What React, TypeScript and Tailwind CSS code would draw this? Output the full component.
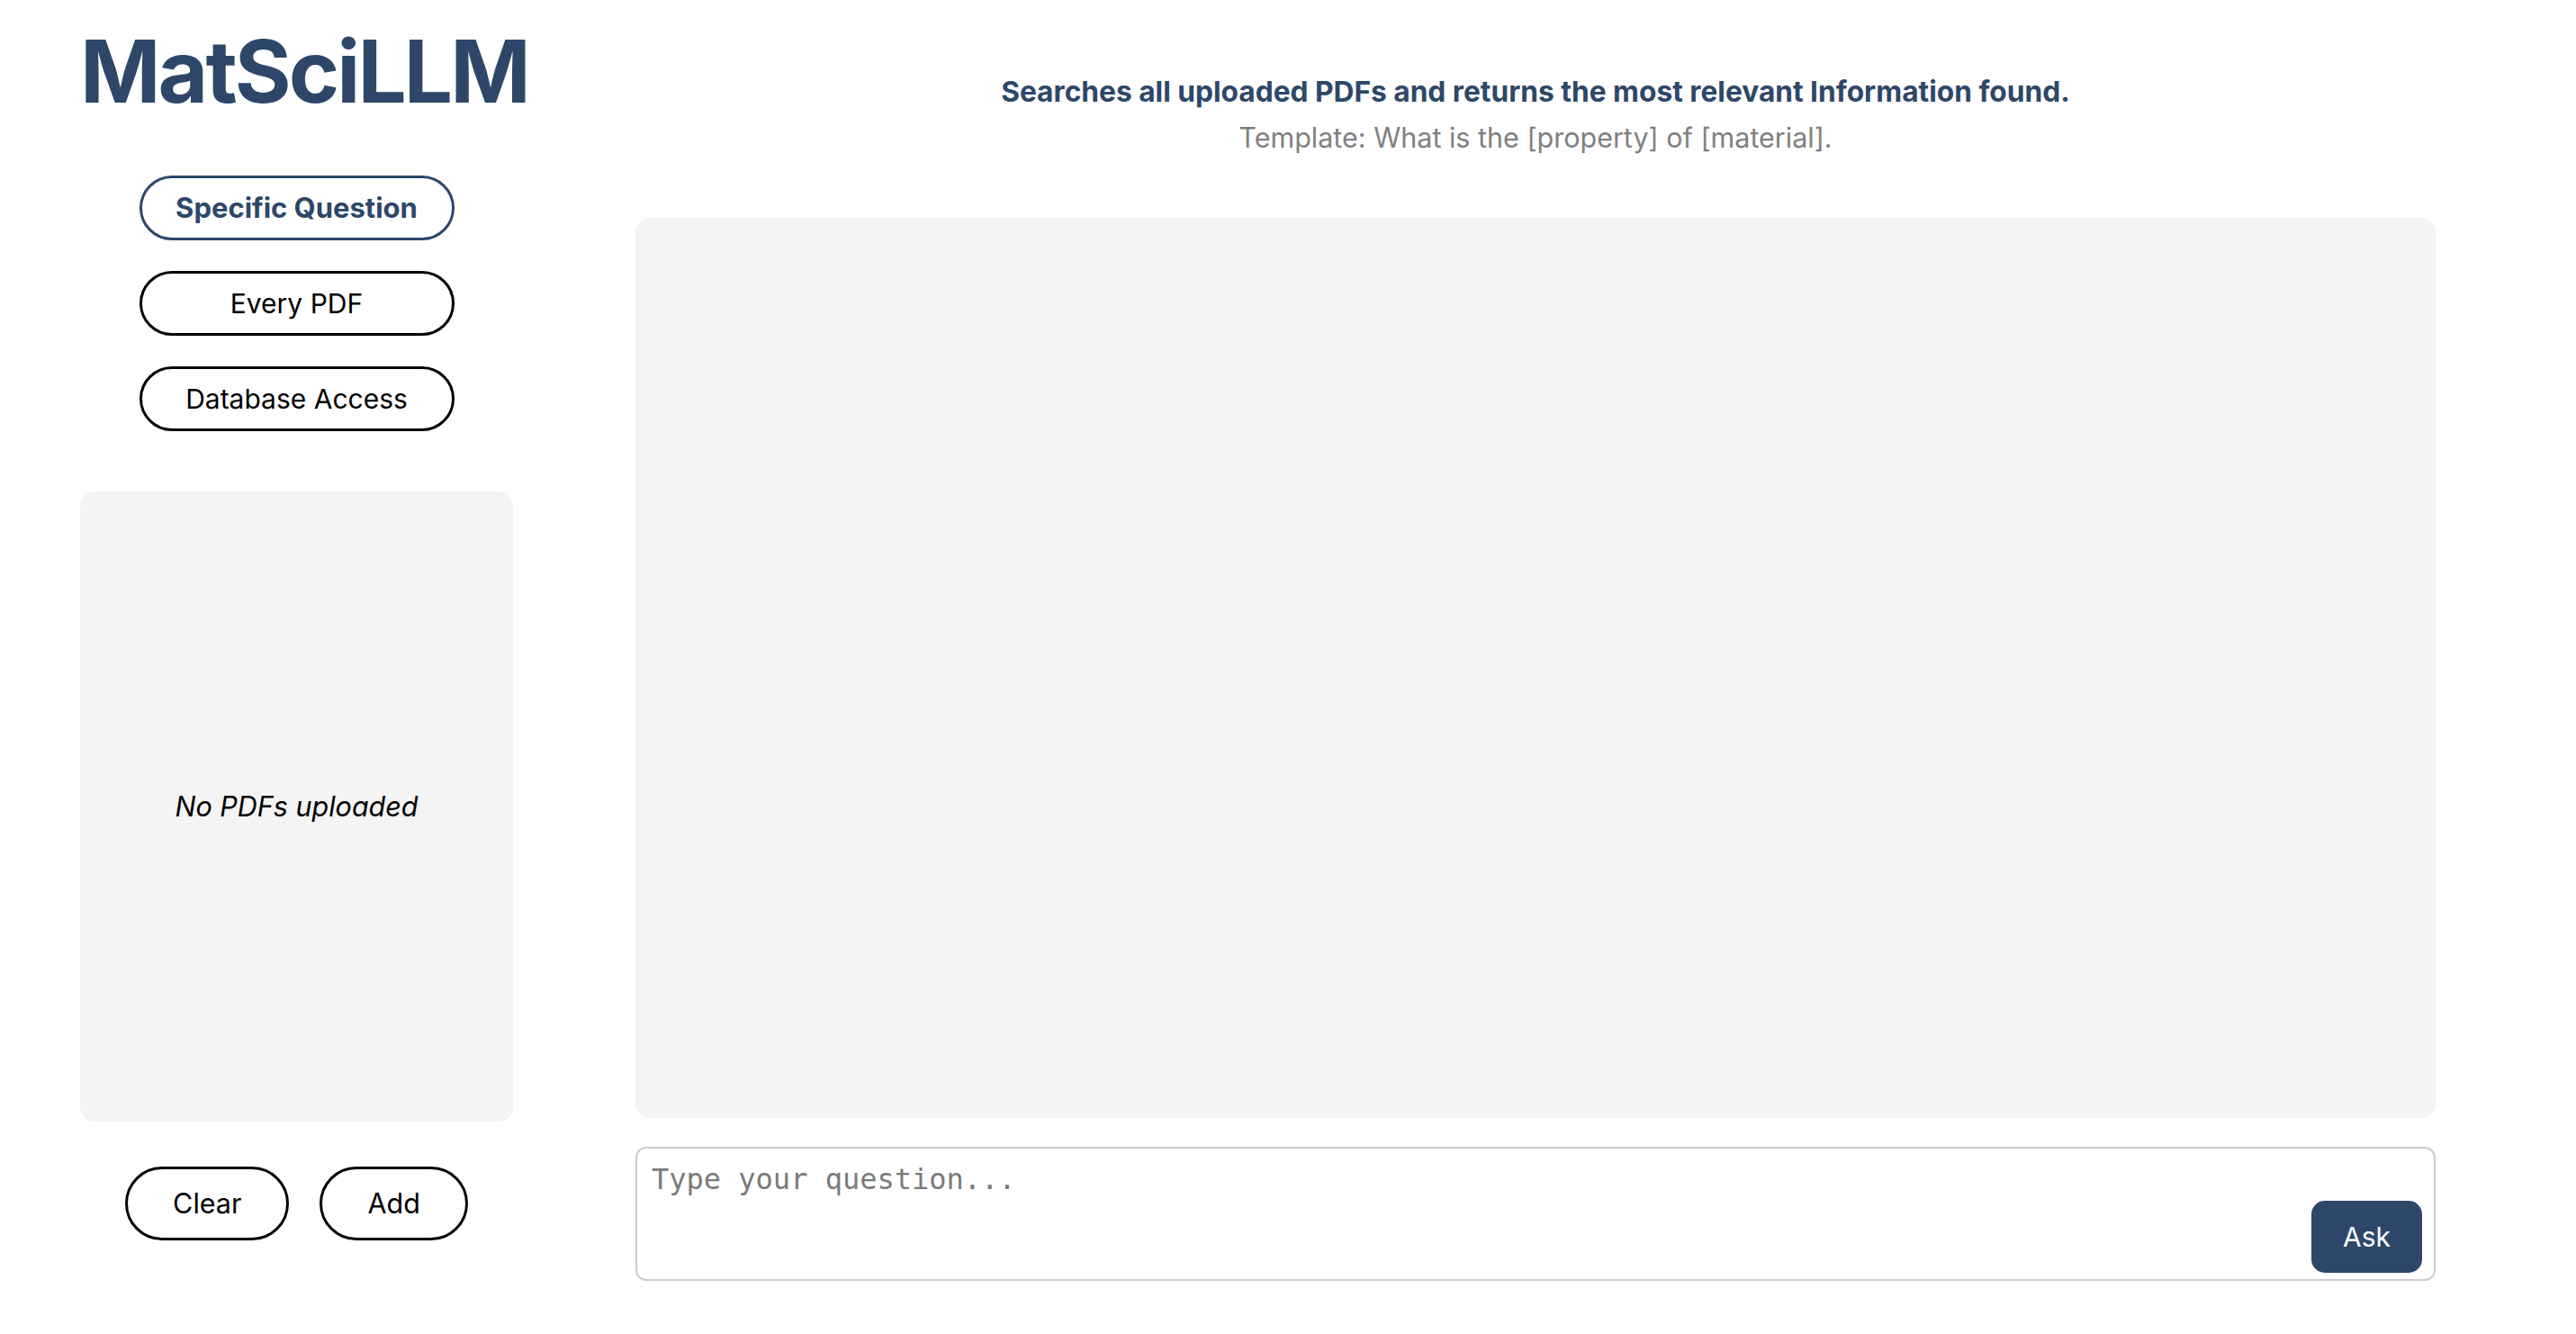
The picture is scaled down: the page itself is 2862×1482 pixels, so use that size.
import { useState } from "react";

const modes = ["Specific Question", "Every PDF", "Database Access"];

export default function App() {
  const [mode, setMode] = useState("Specific Question");
  const [question, setQuestion] = useState("");

  return (
    <div className="flex min-h-screen bg-white pl-[89px] font-['Inter','Liberation_Sans',sans-serif] text-black">
      {/* sidebar */}
      <div className="flex w-[481px] flex-col">
        <h1 className="mt-[31px] text-[96px] font-bold leading-none tracking-[-0.03em] text-[#2e4769]">
          MatSciLLM
        </h1>

        <div className="mt-[68px] flex flex-col items-center gap-[34px]">
          {modes.map((m) => (
            <button
              key={m}
              onClick={() => setMode(m)}
              className={
                mode === m
                  ? "flex h-[72px] w-[350px] items-center justify-center rounded-full border-[3px] border-[#2e4769] text-[31px] font-bold text-[#2e4769]"
                  : "flex h-[72px] w-[350px] items-center justify-center rounded-full border-[3px] border-black text-[30px] text-black"
              }
            >
              {m}
            </button>
          ))}
        </div>

        <div className="mt-[67px] flex h-[700px] items-center justify-center rounded-[16px] bg-[#f4f4f4]">
          <span className="text-[30.5px] italic">No PDFs uploaded</span>
        </div>

        <div className="mt-[50px] flex justify-center gap-[34px]">
          <button className="flex h-[82px] items-center rounded-full border-[3px] border-black px-[50px] text-[30.5px]">
            Clear
          </button>
          <button className="flex h-[82px] items-center rounded-full border-[3px] border-black px-[50px] text-[30.5px]">
            Add
          </button>
        </div>
      </div>

      {/* main */}
      <div className="ml-[136px] flex w-[2000px] flex-col">
        <div className="mt-[84px] flex flex-col items-center gap-[15px]">
          <p className="text-[31.7px] font-bold leading-[36px] text-[#2e4769]">
            Searches all uploaded PDFs and returns the most relevant Information found.
          </p>
          <p className="text-[30.5px] leading-[36px] text-[#808080]">
            Template: What is the [property] of [material].
          </p>
        </div>

        <div className="mt-[71px] h-[1000px] rounded-[16px] bg-[#f4f4f4]" />

        <div className="mt-[32px] flex h-[149px] items-end rounded-[12px] border-2 border-[#cccccc] bg-white">
          <textarea
            value={question}
            onChange={(e) => setQuestion(e.target.value)}
            placeholder="Type your question..."
            className="h-full flex-1 resize-none rounded-[12px] bg-transparent p-[16px] font-['DejaVu_Sans_Mono',monospace] text-[32px] leading-[37px] outline-none placeholder:text-[#7a7a7a]"
          />
          <button className="mb-[7px] mr-[13px] flex h-[80px] w-[123px] items-center justify-center rounded-[15px] bg-[#2e4769] text-[30px] text-white">
            Ask
          </button>
        </div>
      </div>
    </div>
  );
}
